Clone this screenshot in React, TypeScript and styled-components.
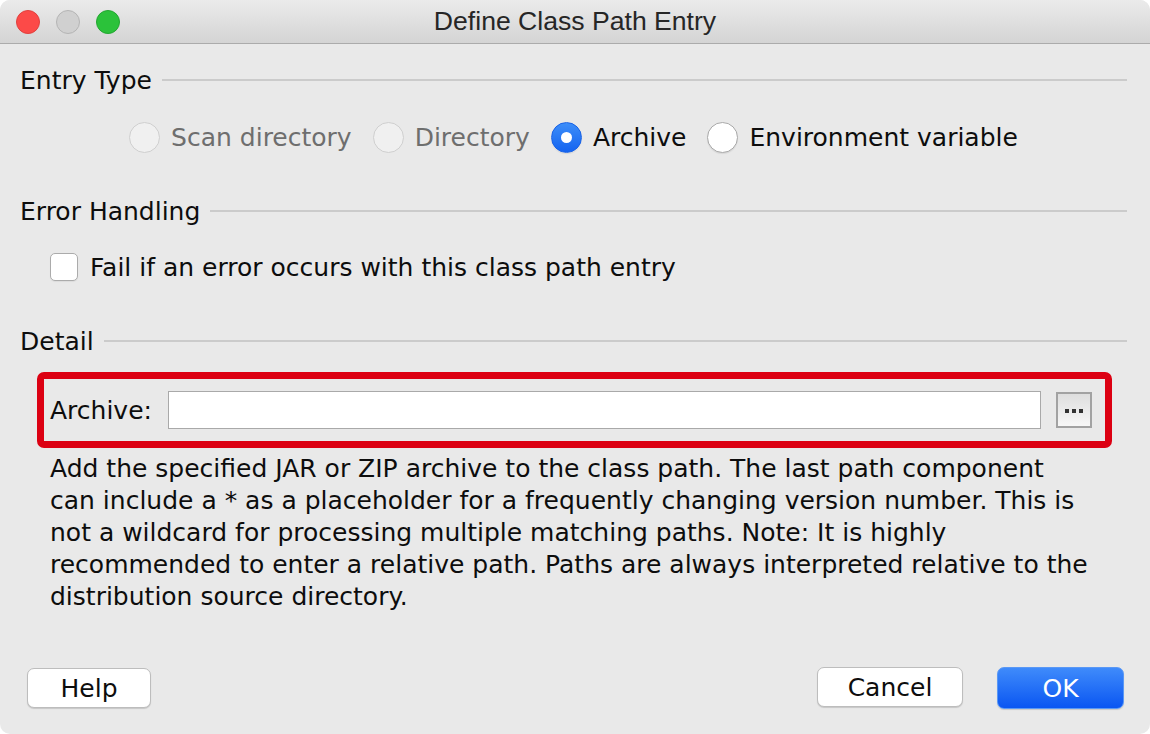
import React from "react";
import styled, { createGlobalStyle } from "styled-components";

const Global = createGlobalStyle`
  html, body { margin: 0; padding: 0; background: #ffffff; }
  body { font-family: "DejaVu Sans", "Liberation Sans", sans-serif; }
  * { box-sizing: border-box; }
`;

const Window = styled.div`
  width: 1150px;
  height: 734px;
  background: #e9e9e9;
  border-radius: 10px;
  overflow: hidden;
  display: flex;
  flex-direction: column;
  font-family: "DejaVu Sans", "Liberation Sans", sans-serif;
  font-size: 25px;
  color: #0d0d0d;
`;

const TitleBar = styled.div`
  height: 44px;
  flex: none;
  background: linear-gradient(#ebebeb, #d4d4d4);
  border-bottom: 1px solid #ababab;
  display: flex;
  align-items: center;
  position: relative;
`;

const Lights = styled.div`
  display: flex;
  gap: 16px;
  padding-left: 16px;
  position: absolute;
  left: 0;
  top: 10px;
`;

const Light = styled.span<{ $c: string; $b: string }>`
  width: 24px;
  height: 24px;
  border-radius: 50%;
  background: ${(p) => p.$c};
  border: 1px solid ${(p) => p.$b};
`;

const Title = styled.div`
  flex: 1;
  text-align: center;
  font-family: "Liberation Sans", "Inter", sans-serif;
  font-size: 26.6px;
  color: #262626;
`;

const Body = styled.div`
  flex: 1;
  display: flex;
  flex-direction: column;
  padding: 20px 23px 25px 20px;
`;

const SectionHeader = styled.div<{ $mt?: number }>`
  display: flex;
  align-items: center;
  gap: 10px;
  height: 32px;
  margin-top: ${(p) => p.$mt ?? 0}px;
`;

const SectionTitle = styled.span`
  white-space: nowrap;
`;

const Rule = styled.div`
  flex: 1;
  height: 2px;
  background: #cbcbcb;
`;

const RadioRow = styled.div`
  display: flex;
  justify-content: center;
  align-items: center;
  gap: 21px;
  height: 32px;
  margin-top: 25px;
`;

const RadioItem = styled.label<{ $disabled?: boolean }>`
  display: flex;
  align-items: center;
  gap: 11px;
  color: ${(p) => (p.$disabled ? "#6e6e6e" : "#0d0d0d")};
`;

const RadioCircle = styled.span<{ $checked?: boolean; $disabled?: boolean }>`
  width: 31px;
  height: 31px;
  border-radius: 50%;
  display: flex;
  align-items: center;
  justify-content: center;
  background: ${(p) =>
    p.$checked
      ? "linear-gradient(#3d8ef9, #1463f0)"
      : p.$disabled
      ? "#f0f0f0"
      : "#ffffff"};
  border: 1px solid
    ${(p) => (p.$checked ? "#1a63e6" : p.$disabled ? "#cfcfcf" : "#a9a9a9")};
  box-shadow: ${(p) => (p.$disabled ? "none" : "0 1px 1px rgba(0,0,0,0.08)")};
  &::after {
    content: "";
    display: ${(p) => (p.$checked ? "block" : "none")};
    width: 11px;
    height: 11px;
    border-radius: 50%;
    background: #fff;
  }
`;

const CheckRow = styled.label`
  display: flex;
  align-items: center;
  gap: 12px;
  height: 32px;
  margin-top: 24px;
  padding-left: 30px;
`;

const CheckBox = styled.span`
  width: 28px;
  height: 28px;
  border-radius: 5px;
  background: #fff;
  border: 1px solid #ababab;
  box-shadow: 0 1px 1px rgba(0, 0, 0, 0.06);
`;

const Highlight = styled.div`
  margin: 15px 15px 0 17px;
  border: 7px solid #dc0012;
  border-radius: 7px;
  height: 76px;
  display: flex;
  align-items: center;
  padding: 0 13px 0 6px;
`;

const FieldLabel = styled.span`
  margin-right: 16px;
`;

const TextInput = styled.div`
  flex: 1;
  height: 38px;
  background: #fff;
  border: 1px solid #a9a9a9;
`;

const BrowseButton = styled.div`
  width: 36px;
  height: 36px;
  margin-left: 15px;
  border: 2px solid #a2a2a2;
  background: linear-gradient(#dedede, #f7f7f7);
  display: flex;
  align-items: center;
  justify-content: center;
  gap: 3px;
  padding-top: 2px;
`;

const Dot = styled.span`
  width: 4px;
  height: 4px;
  background: #333;
`;

const Description = styled.p`
  margin: 5px 0 0 30px;
  line-height: 32px;
`;

const Spacer = styled.div`
  flex: 1;
`;

const Footer = styled.div`
  display: flex;
  align-items: center;
  padding-left: 7px;
`;

const Button = styled.div<{ $w: number; $primary?: boolean }>`
  width: ${(p) => p.$w}px;
  height: ${(p) => (p.$primary ? 42 : 40)}px;
  border-radius: 7px;
  display: flex;
  align-items: center;
  justify-content: center;
  font-size: 25px;
  color: ${(p) => (p.$primary ? "#ffffff" : "#0d0d0d")};
  background: ${(p) =>
    p.$primary ? "linear-gradient(#3f8bfb, #0a56f2)" : "#ffffff"};
  border: 1px solid ${(p) => (p.$primary ? "#5a98f5" : "#bdbdbd")};
  box-shadow: 0 1px 1px rgba(0, 0, 0, 0.15);
`;

const ButtonGroup = styled.div`
  display: flex;
  gap: 34px;
  margin-left: auto;
  margin-right: 3px;
`;

export default function App() {
  return (
    <>
      <Global />
      <Window>
        <TitleBar>
          <Lights>
            <Light $c="#fc4a48" $b="#e0403e" />
            <Light $c="#d0d0d0" $b="#b4b4b4" />
            <Light $c="#2bc23a" $b="#23a631" />
          </Lights>
          <Title>Define Class Path Entry</Title>
        </TitleBar>
        <Body>
          <SectionHeader>
            <SectionTitle>Entry Type</SectionTitle>
            <Rule />
          </SectionHeader>
          <RadioRow>
            <RadioItem $disabled>
              <RadioCircle $disabled />
              Scan directory
            </RadioItem>
            <RadioItem $disabled>
              <RadioCircle $disabled />
              Directory
            </RadioItem>
            <RadioItem>
              <RadioCircle $checked />
              Archive
            </RadioItem>
            <RadioItem>
              <RadioCircle />
              Environment variable
            </RadioItem>
          </RadioRow>
          <SectionHeader $mt={42}>
            <SectionTitle>Error Handling</SectionTitle>
            <Rule />
          </SectionHeader>
          <CheckRow>
            <CheckBox />
            Fail if an error occurs with this class path entry
          </CheckRow>
          <SectionHeader $mt={42}>
            <SectionTitle>Detail</SectionTitle>
            <Rule />
          </SectionHeader>
          <Highlight>
            <FieldLabel>Archive:</FieldLabel>
            <TextInput />
            <BrowseButton>
              <Dot />
              <Dot />
              <Dot />
            </BrowseButton>
          </Highlight>
          <Description>
            Add the specified JAR or ZIP archive to the class path. The last path component
            <br />
            can include a * as a placeholder for a frequently changing version number. This is
            <br />
            not a wildcard for processing multiple matching paths. Note: It is highly
            <br />
            recommended to enter a relative path. Paths are always interpreted relative to the
            <br />
            distribution source directory.
          </Description>
          <Spacer />
          <Footer>
            <Button $w={124}>Help</Button>
            <ButtonGroup>
              <Button $w={146}>Cancel</Button>
              <Button $w={127} $primary>
                OK
              </Button>
            </ButtonGroup>
          </Footer>
        </Body>
      </Window>
    </>
  );
}
